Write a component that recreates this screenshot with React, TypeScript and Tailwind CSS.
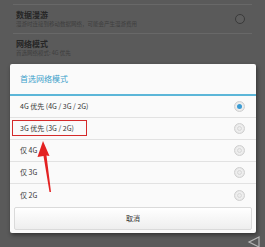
import React from 'react'

const font = { fontFamily: '"Noto Sans CJK SC", "Noto Sans", sans-serif' }

const options = [
  { label: '4G 优先 (4G / 3G / 2G)', checked: true },
  { label: '3G 优先 (3G / 2G)', checked: false },
  { label: '仅 4G', checked: false },
  { label: '仅 3G', checked: false },
  { label: '仅 2G', checked: false },
]

function Radio({ checked }: { checked: boolean }) {
  return (
    <div className="flex h-[11px] w-[11px] items-center justify-center rounded-full border border-[#cfcfcf] bg-[radial-gradient(circle,#f4f4f4_30%,#dedede_100%)]">
      {checked ? (
        <div className="h-[5px] w-[5px] rounded-full bg-[#3b9bd3]" />
      ) : (
        <div className="h-[5px] w-[5px] rounded-full border border-[#d6d6d6] bg-[#ececec]" />
      )}
    </div>
  )
}

export default function App() {
  return (
    <div className="relative h-[247px] w-[265px] overflow-hidden bg-[#5a5a5a]" style={font}>
      {/* dimmed settings list */}
      <div className="px-[13px] pt-[4px]">
        <div className="h-px bg-[#686868]" />
        <div className="flex h-[28px] items-center justify-between">
          <div className="flex flex-col pl-[3px]">
            <span className="h-[10px] text-[8px] leading-[10px] font-bold text-[#262626]">数据漫游</span>
            <span className="h-[8px] text-[5.5px] leading-[8px] text-[#3e3e3e]">漫游时连接到移动数据网络，可能会产生漫游费用</span>
          </div>
          <div className="mr-[7px] h-[10px] w-[10px] rounded-full border border-[#3a3a3a] bg-[#5e5e5e]" />
        </div>
        <div className="h-px bg-[#686868]" />
        <div className="flex flex-col pt-[5px] pl-[3px]">
          <span className="h-[10px] text-[8px] leading-[10px] font-bold text-[#262626]">网络模式</span>
          <span className="h-[8px] text-[5.5px] leading-[8px] text-[#3e3e3e]">首选网络模式: 4G 优先</span>
        </div>
      </div>

      {/* dialog */}
      <div className="absolute left-[10px] top-[64px] flex h-[169px] w-[246px] flex-col rounded-[2px] bg-[#fafafa] shadow-[1px_2px_4px_rgba(0,0,0,0.45)]">
        <div className="flex h-[30px] items-center px-[10px] text-[8px] text-[#3a9fca]">首选网络模式</div>
        <div className="h-[2px] bg-[#5cb6d8]" />
        {options.map((o, i) => (
          <div
            key={o.label}
            className={`flex h-[22px] items-center justify-between pl-[10px] pr-[11px] ${i < options.length - 1 ? 'border-b border-[#e2e2e2]' : ''}`}
          >
            <span className="text-[7px] text-[#353535]">{o.label}</span>
            <Radio checked={o.checked} />
          </div>
        ))}
        <div className="mx-[4px] mt-px flex h-[23px] items-center justify-center rounded-[2px] border border-[#dadada] bg-gradient-to-b from-[#ffffff] to-[#eeeeee] text-[7px] text-[#353535]">
          取消
        </div>
      </div>

      {/* annotation: red box */}
      <div className="absolute left-[12px] top-[120px] h-[16px] w-[75px] border-[1.5px] border-[#d42a2a]" />

      {/* annotation: red arrow */}
      <svg className="absolute left-0 top-0" width="265" height="247" viewBox="0 0 265 247">
        <polygon points="43,141 49.5,156 46.5,155.5 51,192 49.5,192 43.5,156 37.5,157" fill="#e32222" />
        <polygon points="259,237 249,242 259,247" fill="none" stroke="#b5b5b5" strokeWidth="1.2" />
      </svg>
    </div>
  )
}
